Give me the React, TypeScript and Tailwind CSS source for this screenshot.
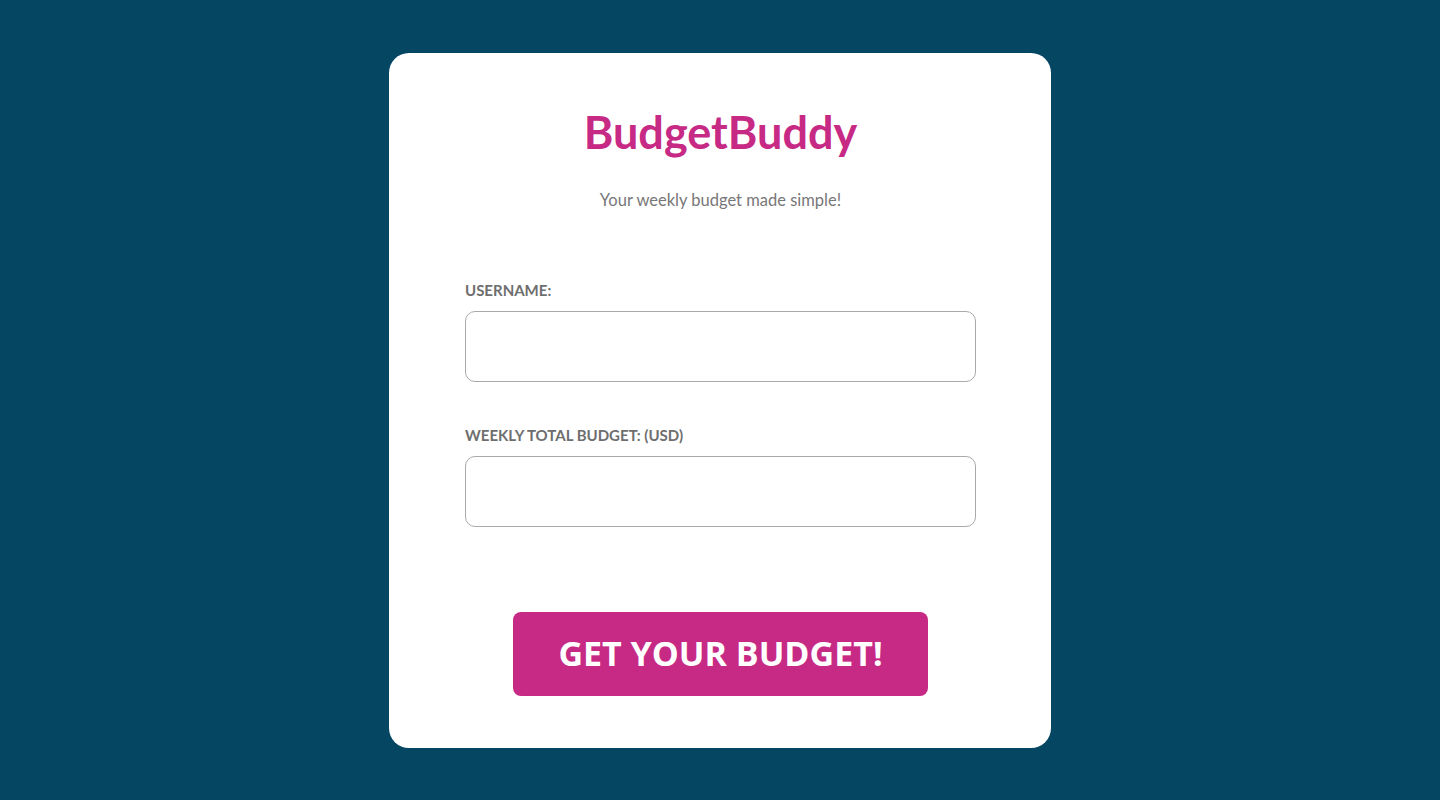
export default function App() {
  return (
    <div
      className="min-h-screen w-full bg-[#054662] flex justify-center pt-[53px]"
      style={{ fontFamily: "Lato, 'Noto Sans', sans-serif" }}
    >
      <div className="w-[662px] h-[695px] bg-white rounded-[20px] pl-[76px] pr-[75px] pt-[58px] flex flex-col">
        <h1 className="text-center text-[45px] leading-none font-bold text-[#c72a85] -mt-[1px]">
          BudgetBuddy
        </h1>
        <p className="text-center text-[16.5px] text-[#777] mt-[37px] leading-none">
          Your weekly budget made simple!
        </p>

        <label className="mt-[74px] text-[15px] font-bold text-[#6e6e6e] leading-none">
          USERNAME:
        </label>
        <input
          type="text"
          className="mt-[13px] h-[71px] w-full border border-[#aaa] rounded-[10px] px-3 outline-none"
        />

        <label className="mt-[46px] text-[15px] font-bold text-[#6e6e6e] leading-none">
          WEEKLY TOTAL BUDGET: (USD)
        </label>
        <input
          type="text"
          className="mt-[13px] h-[71px] w-full border border-[#aaa] rounded-[10px] px-3 outline-none"
        />

        <button
          className="mt-[85px] mx-auto w-[415px] h-[84px] rounded-[8px] bg-[#c72a85] text-white text-[34px] font-bold"
          style={{ fontFamily: "'Open Sans', sans-serif" }}
        >
          GET YOUR BUDGET!
        </button>
      </div>
    </div>
  );
}
